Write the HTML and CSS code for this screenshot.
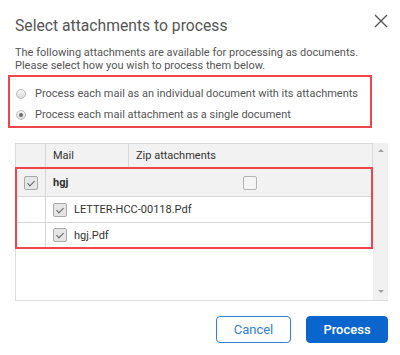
FILE: index.html
```html
<!DOCTYPE html>
<html lang="en">
<head>
  <meta charset="UTF-8">
  <meta name="viewport" content="width=device-width, initial-scale=1.0">
  <title>Select attachments to process</title>
  <link rel="stylesheet" href="styles.css">
</head>
<body>
  <div class="dialog">
    <div class="head">
      <h1>Select attachments to process</h1>
      <button class="close" aria-label="Close">
        <svg width="14" height="14" viewBox="0 0 14 14"><path d="M1 1 L13 13 M13 1 L1 13" stroke="#555" stroke-width="1.4" fill="none"/></svg>
      </button>
    </div>
    <p class="intro">The following attachments are available for processing as documents.<br>Please select how you wish to process them below.</p>

    <div class="options">
      <label class="option"><span class="radio"></span>Process each mail as an individual document with its attachments</label>
      <label class="option"><span class="radio on"></span>Process each mail attachment as a single document</label>
    </div>

    <div class="grid-wrap">
      <div class="table">
        <div class="thead">
          <div class="cell"></div>
          <div class="cell">Mail</div>
          <div class="cell">Zip attachments</div>
        </div>
        <div class="rows">
          <div class="row mail">
            <div class="cell sel"><span class="box checked"></span></div>
            <div class="cell name">hgj</div>
            <div class="cell zip"><span class="box"></span></div>
          </div>
          <div class="row file">
            <div class="cell sel"></div>
            <div class="cell wide"><span class="box checked"></span>LETTER-HCC-00118.Pdf</div>
          </div>
          <div class="row file last">
            <div class="cell sel"></div>
            <div class="cell wide"><span class="box checked"></span>hgj.Pdf</div>
          </div>
        </div>
        <div class="filler"></div>
      </div>
      <div class="scrollbar">
        <span class="arrow up"></span>
        <span class="arrow down"></span>
      </div>
    </div>

    <div class="actions">
      <button class="btn cancel">Cancel</button>
      <button class="btn primary">Process</button>
    </div>
  </div>
</body>
</html>
```

FILE: styles.css
```css
body { margin: 0; background: #fff; font-family: Roboto, "Liberation Sans", sans-serif; color: #555; }
.dialog { padding: 0 12px 0 15px; }

.head { display: flex; justify-content: space-between; align-items: flex-start; padding-top: 16px; }
.head h1 { margin: 0; font-size: 15.7px; line-height: 20px; font-weight: 400; color: #555; }
.close { border: 0; background: none; padding: 0; margin-top: -2px; width: 14px; height: 14px; cursor: pointer; }
.close svg { display: block; }

.intro { margin: 10px 0 0; font-size: 11px; line-height: 13px; }

.options { margin: 3px 16px 0 -7px; border: 2px solid #f1454c; padding: 6px 0 1px 6px; }
.option { display: flex; align-items: center; height: 21px; font-size: 11px; gap: 9px; }
.radio { width: 10px; height: 10px; border-radius: 50%; border: 1px solid #bdbdbd; background: linear-gradient(#f4f4f4, #dcdcdc); box-sizing: border-box; position: relative; }
.radio.on::after { content: ""; position: absolute; left: 2px; top: 2px; width: 4px; height: 4px; border-radius: 50%; background: #6b6b6b; }

.grid-wrap { display: flex; height: 157px; margin-top: 15px; border-bottom: 1px solid #dcdcdc; }
.table { width: 358px; display: flex; flex-direction: column; font-size: 11px; color: #333; }
.thead { display: grid; grid-template-columns: 30px 83px 1fr; height: 24px; box-sizing: border-box; border: 1px solid #d9d9d9; border-bottom: 0; background: #f2f2f2; }
.cell { display: flex; align-items: center; box-sizing: border-box; }
.thead .cell { border-right: 1px solid #d9d9d9; padding-left: 7px; }
.thead .cell:last-child { border-right: 0; }

.rows { border: 2px solid #f1454c; }
.row { display: grid; grid-template-columns: 29px 1fr; border-bottom: 1px solid #d6d6d6; height: 26px; box-sizing: border-box; }
.row.last { border-bottom: 0; height: 24px; }
.row.mail { grid-template-columns: 29px 83px 1fr; height: 28px; background: #f2f2f2; }
.row .sel { border-right: 1px solid #d6d6d6; justify-content: center; }
.row .name { padding-left: 7px; font-weight: 700; }
.row .zip { justify-content: center; }
.row .wide { padding-left: 7px; gap: 7px; font-size: 11px; }
.filler { flex: 1; border-left: 1px solid #dcdcdc; }

.box { width: 14px; height: 14px; box-sizing: border-box; border: 1px solid #b4b4b4; border-radius: 2px; background: #f4f4f4; position: relative; }
.box.checked { background: #e6e6e6; border-color: #a9a9a9; }
.box.checked::after { content: ""; position: absolute; left: 4px; top: 2px; width: 3px; height: 6px; border: solid #666; border-width: 0 1px 1px 0; transform: rotate(45deg); }

.scrollbar { width: 15px; background: #f1f1f1; display: flex; flex-direction: column; justify-content: space-between; align-items: center; padding: 6px 0 7px; box-sizing: border-box; }
.arrow { width: 0; height: 0; border-left: 3px solid transparent; border-right: 3px solid transparent; }
.arrow.up { border-bottom: 3px solid #a3a3a3; }
.arrow.down { border-top: 3px solid #a3a3a3; }

.actions { display: flex; justify-content: flex-end; gap: 15px; margin-top: 15px; }
.btn { height: 27px; border-radius: 4px; font-family: Roboto, "Liberation Sans", sans-serif; font-size: 13px; cursor: pointer; }
.cancel { width: 75px; background: #fff; color: #2f7fd6; border: 1px solid #2f7fd6; }
.primary { width: 82px; background: #0a66cc; color: #fff; border: 1px solid #0a66cc; font-weight: 500; }
```
